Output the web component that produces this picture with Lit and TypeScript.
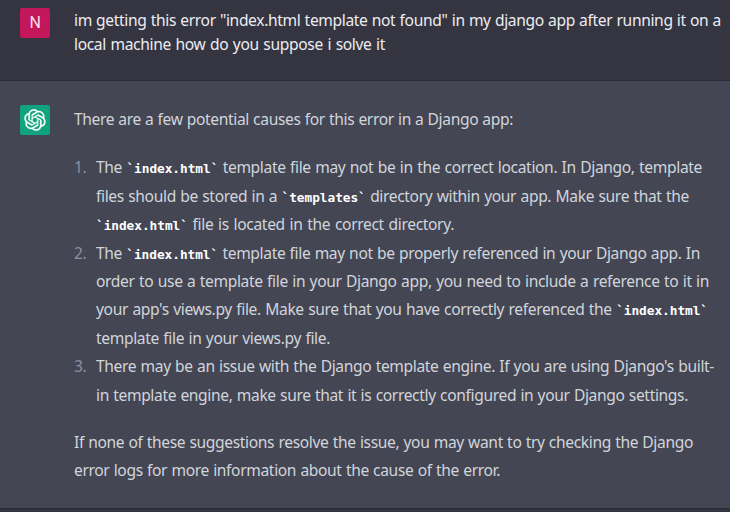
import { LitElement, html, css } from "lit";
import { customElement, property } from "lit/decorators.js";

interface Line {
  text: string;
  width: number;
}

const question: Line[] = [
  { text: 'im getting this error "index.html template not found" in my django app after running it on a', width: 647 },
  { text: "local machine how do you suppose i solve it", width: 311 },
];

const intro: Line[] = [
  { text: "There are a few potential causes for this error in a Django app:", width: 439 },
];

const causes: Line[][] = [
  [
    { text: "The `index.html` template file may not be in the correct location. In Django, template", width: 606 },
    { text: "files should be stored in a `templates` directory within your app. Make sure that the", width: 593 },
    { text: "`index.html` file is located in the correct directory.", width: 358 },
  ],
  [
    { text: "The `index.html` template file may not be properly referenced in your Django app. In", width: 604 },
    { text: "order to use a template file in your Django app, you need to include a reference to it in", width: 613 },
    { text: "your app's views.py file. Make sure that you have correctly referenced the `index.html`", width: 612 },
    { text: "template file in your views.py file.", width: 234 },
  ],
  [
    { text: "There may be an issue with the Django template engine. If you are using Django's built-", width: 618 },
    { text: "in template engine, make sure that it is correctly configured in your Django settings.", width: 592 },
  ],
];

const outro: Line[] = [
  { text: "If none of these suggestions resolve the issue, you may want to try checking the Django", width: 619 },
  { text: "error logs for more information about the cause of the error.", width: 426 },
];

@customElement("text-lines")
class TextLines extends LitElement {
  @property({ attribute: false }) lines: Line[] = [];

  static styles = css`
    :host { display: block; }
    .line {
      white-space: nowrap;
      text-align: justify;
      text-align-last: justify;
      word-spacing: -2px;
    }
    .code {
      font: 700 12.8px/1 "DejaVu Sans Mono", monospace;
      color: #fff;
      letter-spacing: -0.05px;
    }
  `;

  render() {
    return this.lines.map(
      (line) => html`<div class="line" style="width:${line.width}px">${line.text
        .split(/(`[^`]+`)/)
        .map((part) => (part.startsWith("`") ? html`<span class="code">${part}</span>` : part))}</div>`
    );
  }
}

@customElement("app-root")
class AppRoot extends LitElement {
  static styles = css`
    :host {
      display: flex;
      flex-direction: column;
      height: 512px;
      overflow: hidden;
      background: #343541;
      font: 15.6px/24px "Noto Sans", "Open Sans", sans-serif;
      letter-spacing: -0.36px;
    }
    .row {
      display: flex;
      gap: 24px;
      box-sizing: border-box;
      padding-left: 20px;
      border-bottom: 1px solid #2a2b32;
    }
    .user {
      height: 81px;
      padding-top: 8px;
      color: #ececf1;
    }
    .bot {
      height: 428px;
      padding-top: 24px;
      background: #444654;
      color: #d1d5db;
      line-height: 28.4px;
    }
    .avatar {
      flex: none;
      display: flex;
      align-items: center;
      justify-content: center;
      width: 30px;
      height: 30px;
      border-radius: 2px;
      color: #fff;
    }
    .initial {
      background: #c2185b;
      color: #f6dfe9;
      font: 400 16px/30px Roboto, sans-serif;
    }
    .logo { background: #10a37f; }
    .body { flex: none; }
    .list {
      display: flex;
      flex-direction: column;
      margin: 20px 0 19px;
    }
    .item { display: flex; }
    .num { width: 22px; color: #8e8ea0; }
  `;

  render() {
    return html`
      <section class="row user">
        <div class="avatar initial">N</div>
        <text-lines class="body" .lines=${question}></text-lines>
      </section>
      <section class="row bot">
        <div class="avatar logo">
          <svg width="22" height="22" viewBox="0 0 41 41" fill="currentColor" stroke="currentColor" stroke-width="0.5">
            <path d="M37.5324 16.8707C37.9808 15.5241 38.1363 14.0974 37.9886 12.6859C37.8409 11.2744 37.3934 9.91076 36.676 8.68622C35.6126 6.83404 33.9882 5.3676 32.0373 4.4985C30.0864 3.62941 27.9098 3.40259 25.8215 3.85078C24.8796 2.7893 23.7219 1.94125 22.4257 1.36341C21.1295 0.785575 19.7249 0.491269 18.3058 0.500197C16.1708 0.495044 14.0893 1.16803 12.3614 2.42214C10.6335 3.67624 9.34853 5.44666 8.6917 7.47815C7.30085 7.76286 5.98686 8.3414 4.8377 9.17505C3.68854 10.0087 2.73073 11.0782 2.02839 12.312C0.956464 14.1591 0.498905 16.2988 0.721698 18.4228C0.944492 20.5467 1.83612 22.5449 3.268 24.1293C2.81966 25.4759 2.66413 26.9026 2.81182 28.3141C2.95951 29.7256 3.40701 31.0892 4.12437 32.3138C5.18791 34.1659 6.8123 35.6322 8.76321 36.5013C10.7141 37.3704 12.8907 37.5973 14.9789 37.1492C15.9208 38.2107 17.0786 39.0587 18.3747 39.6366C19.6709 40.2144 21.0755 40.5087 22.4946 40.4998C24.6307 40.5054 26.7133 39.8321 28.4418 38.5772C30.1704 37.3223 31.4556 35.5506 32.1119 33.5179C33.5027 33.2332 34.8167 32.6547 35.9659 31.821C37.115 30.9874 38.0728 29.9178 38.7752 28.684C39.8458 26.8371 40.3023 24.6979 40.0789 22.5748C39.8556 20.4517 38.9639 18.4544 37.5324 16.8707ZM22.4978 37.8849C20.7443 37.8874 19.0459 37.2733 17.6994 36.1501C17.7601 36.117 17.8666 36.0586 17.936 36.0161L25.9004 31.4156C26.1003 31.3019 26.2663 31.137 26.3813 30.9378C26.4964 30.7386 26.5563 30.5124 26.5549 30.2825V19.0542L29.9213 20.998C29.9389 21.0068 29.9541 21.0198 29.9656 21.0359C29.977 21.052 29.9842 21.0707 29.9867 21.0902V30.3889C29.9842 32.375 29.1946 34.2791 27.7909 35.6841C26.3872 37.0892 24.4838 37.8806 22.4978 37.8849ZM6.39227 31.0064C5.51397 29.4888 5.19742 27.7107 5.49804 25.9832C5.55718 26.0187 5.66048 26.0818 5.73461 26.1244L13.699 30.7248C13.8975 30.8408 14.1233 30.902 14.3532 30.902C14.583 30.902 14.8088 30.8408 15.0073 30.7248L24.731 25.1103V28.9979C24.7321 29.0177 24.7283 29.0376 24.7199 29.0556C24.7115 29.0736 24.6988 29.0893 24.6829 29.1012L16.6317 33.7497C14.9096 34.7416 12.8643 35.0097 10.9447 34.4954C9.02506 33.9811 7.38785 32.7263 6.39227 31.0064ZM4.29707 13.6194C5.17156 12.0998 6.55279 10.9364 8.19885 10.3327C8.19885 10.4013 8.19491 10.5228 8.19491 10.6071V19.808C8.19351 20.0378 8.25334 20.2638 8.36823 20.4629C8.48312 20.6619 8.64893 20.8267 8.84863 20.9404L18.5723 26.5542L15.206 28.4979C15.1894 28.5089 15.1703 28.5155 15.1505 28.5173C15.1307 28.5191 15.1107 28.516 15.0924 28.5082L7.04046 23.8557C5.32135 22.8601 4.06716 21.2235 3.55289 19.3046C3.03862 17.3858 3.30624 15.3413 4.29707 13.6194ZM31.955 20.0556L22.2312 14.4411L25.5976 12.4981C25.6142 12.4872 25.6333 12.4805 25.6531 12.4787C25.6729 12.4769 25.6928 12.4801 25.7111 12.4879L33.7631 17.1364C34.9967 17.849 36.0017 18.8982 36.6606 20.1613C37.3194 21.4244 37.6047 22.849 37.4832 24.2684C37.3617 25.6878 36.8382 27.0432 35.9743 28.1759C35.1103 29.3086 33.9415 30.1717 32.6047 30.6641C32.6047 30.5947 32.6047 30.4733 32.6047 30.3889V21.188C32.6066 20.9586 32.5474 20.7328 32.4332 20.5338C32.319 20.3348 32.154 20.1698 31.955 20.0556ZM35.3055 15.0128C35.2464 14.9765 35.1431 14.9142 35.069 14.8717L27.1045 10.2712C26.906 10.1554 26.6803 10.0943 26.4504 10.0943C26.2206 10.0943 25.9948 10.1554 25.7963 10.2712L16.0726 15.8858V11.9982C16.0715 11.9783 16.0753 11.9585 16.0837 11.9405C16.0921 11.9225 16.1048 11.9068 16.1207 11.8949L24.1719 7.25025C25.4053 6.53903 26.8158 6.19376 28.2383 6.25482C29.6608 6.31589 31.0364 6.78077 32.2044 7.59508C33.3723 8.40939 34.2842 9.53945 34.8334 10.8531C35.3826 12.1667 35.5464 13.6095 35.3055 15.0128ZM14.2424 21.9419L10.8752 19.9981C10.8576 19.9893 10.8423 19.9763 10.8309 19.9602C10.8195 19.9441 10.8122 19.9254 10.8098 19.9058V10.6071C10.8107 9.18295 11.2173 7.78848 11.9819 6.58696C12.7466 5.38544 13.8377 4.42659 15.1275 3.82264C16.4173 3.21869 17.8524 2.99464 19.2649 3.1767C20.6775 3.35876 22.0089 3.93941 23.1034 4.85067C23.0427 4.88379 22.937 4.94215 22.8668 4.98473L14.9024 9.58517C14.7025 9.69878 14.5366 9.86356 14.4215 10.0626C14.3065 10.2616 14.2466 10.4877 14.2479 10.7175L14.2424 21.9419ZM16.071 17.9991L20.4018 15.4978L24.7325 17.9975V22.9985L20.4018 25.4983L16.071 22.9985V17.9991Z" />
          </svg>
        </div>
        <div class="body">
          <text-lines .lines=${intro}></text-lines>
          <div class="list">
            ${causes.map(
              (lines, i) => html`<div class="item">
                <span class="num">${i + 1}.</span>
                <text-lines .lines=${lines}></text-lines>
              </div>`
            )}
          </div>
          <text-lines .lines=${outro}></text-lines>
        </div>
      </section>
    `;
  }
}
